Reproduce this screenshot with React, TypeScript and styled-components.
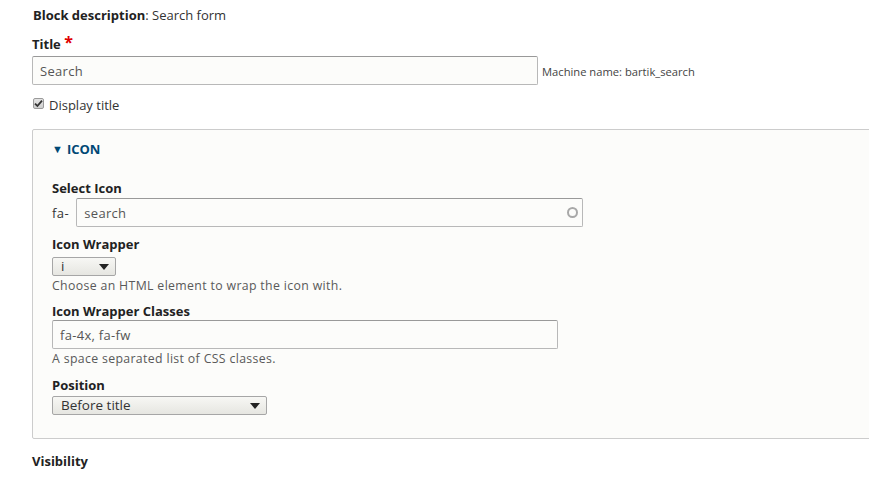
import React from "react";
import styled, { createGlobalStyle } from "styled-components";

const GlobalStyle = createGlobalStyle`
	html, body {
		margin: 0;
		padding: 0;
		background: #ffffff;
		overflow: hidden;
	}
	body {
		font-family: "Open Sans", "Noto Sans", sans-serif;
		font-size: 13px;
		color: #333333;
	}
`;

type InputProps = {
	width: number;
};

type SelectProps = {
	width: number;
};

type LabelProps = {
	gap?: number;
	top?: number;
};

export default function App() {
	return (
		<>
			<GlobalStyle />
			<Page>
				<DescriptionLine>
					<strong>Block description</strong>: Search form
				</DescriptionLine>

				<Label top={11} gap={3}>
					Title <Required>*</Required>
				</Label>
				<InlineRow>
					<TextInput width={506} defaultValue="Search" />
					<MachineName>Machine name: bartik_search</MachineName>
				</InlineRow>

				<CheckRow>
					<CheckBox>
						<svg width="9" height="9" viewBox="0 0 9 9">
							<path
								d="M1 4.6 L3.4 7 L8 1.6"
								fill="none"
								stroke="#333"
								strokeWidth="1.8"
							/>
						</svg>
					</CheckBox>
					Display title
				</CheckRow>

				<Fieldset>
					<Legend>
						<Caret>▼</Caret>ICON
					</Legend>

					<Label top={21} gap={1}>
						Select Icon
					</Label>
					<InlineRow>
						<Prefix>fa-</Prefix>
						<AutoWrap>
							<TextInput width={507} defaultValue="search" />
							<Throbber />
						</AutoWrap>
					</InlineRow>

					<Label top={8} gap={4}>
						Icon Wrapper
					</Label>
					<Select width={64}>
						<span>i</span>
						<Arrow />
					</Select>
					<Help>Choose an HTML element to wrap the icon with.</Help>

					<Label top={8} gap={0}>
						Icon Wrapper Classes
					</Label>
					<TextInput width={506} defaultValue="fa-4x, fa-fw" />
					<Help>A space separated list of CSS classes.</Help>

					<Label top={9} gap={2}>
						Position
					</Label>
					<Select width={215}>
						<span>Before title</span>
						<Arrow />
					</Select>
				</Fieldset>

				<SectionTitle>Visibility</SectionTitle>
			</Page>
		</>
	);
}

const Page = styled.div`
	width: 920px;
	padding: 6px 0 0 32px;
`;

const DescriptionLine = styled.div`
	line-height: 18px;
	margin-left: 1px;
	color: #333;
	strong {
		color: #222;
		font-weight: 700;
	}
`;

const Label = styled.div<LabelProps>`
	font-weight: 700;
	color: #222;
	line-height: 18px;
	margin-top: ${(p) => p.top ?? 8}px;
	margin-bottom: ${(p) => p.gap ?? 2}px;
`;

const Required = styled.span`
	color: #e00000;
	font-size: 16px;
	line-height: 10px;
	vertical-align: 1px;
`;

const InlineRow = styled.div`
	display: flex;
	align-items: center;
`;

const TextInput = styled.input<InputProps>`
	box-sizing: border-box;
	width: ${(p) => p.width}px;
	height: 29px;
	padding: 0 7px;
	border: 1px solid #b8b8b8;
	border-top-color: #999999;
	border-radius: 2px;
	background: #fcfcfa;
	font-family: "Open Sans", "Noto Sans", sans-serif;
	font-size: 13px;
	letter-spacing: 0.3px;
	color: #555;
	outline: none;
	display: block;
`;

const MachineName = styled.span`
	font-size: 11.2px;
	color: #444;
	margin-left: 4px;
	margin-top: 2px;
`;

const CheckRow = styled.div`
	display: flex;
	align-items: center;
	margin-top: 11px;
	margin-left: 1px;
	line-height: 18px;
	color: #333;
`;

const CheckBox = styled.span`
	box-sizing: border-box;
	width: 11px;
	height: 11px;
	margin-right: 5px;
	margin-top: -3px;
	border: 1px solid #9a9a9a;
	border-radius: 2px;
	background: linear-gradient(#e4e4e4, #cfcfcf);
	display: flex;
	align-items: center;
	justify-content: center;
`;

const Fieldset = styled.div`
	box-sizing: border-box;
	margin-top: 15px;
	padding: 9px 19px 23px;
	border: 1px solid #cccccc;
	border-radius: 2px;
	background: #fcfcfa;
`;

const Legend = styled.div`
	color: #004875;
	font-weight: 700;
	line-height: 18px;
	display: flex;
	align-items: center;
`;

const Caret = styled.span`
	font-size: 11px;
	margin-right: 4px;
	margin-top: 1px;
`;

const Prefix = styled.span`
	color: #333;
	margin-right: 7px;
	letter-spacing: 0.5px;
`;

const AutoWrap = styled.div`
	position: relative;
	display: flex;
`;

const Throbber = styled.span`
	position: absolute;
	right: 5px;
	top: 9px;
	box-sizing: border-box;
	width: 11px;
	height: 11px;
	border: 2px solid #a8a8a8;
	border-radius: 50%;
`;

const Select = styled.div<SelectProps>`
	box-sizing: border-box;
	width: ${(p) => p.width}px;
	height: 19px;
	padding: 0 6px 0 8px;
	border: 1px solid #a6a6a6;
	border-radius: 2px;
	background: linear-gradient(#f7f7f4, #e6e6e1);
	display: flex;
	align-items: center;
	justify-content: space-between;
	font-size: 13.5px;
	color: #333;
	span {
		line-height: 17px;
	}
`;

const Arrow = styled.i`
	width: 0;
	height: 0;
	border-left: 5px solid transparent;
	border-right: 5px solid transparent;
	border-top: 6px solid #222;
`;

const Help = styled.div`
	font-size: 12.3px;
	color: #595959;
	line-height: 16px;
	margin-top: 2px;
	letter-spacing: 0.35px;
`;

const SectionTitle = styled.div`
	font-weight: 700;
	color: #222;
	line-height: 18px;
	margin-top: 13px;
`;
